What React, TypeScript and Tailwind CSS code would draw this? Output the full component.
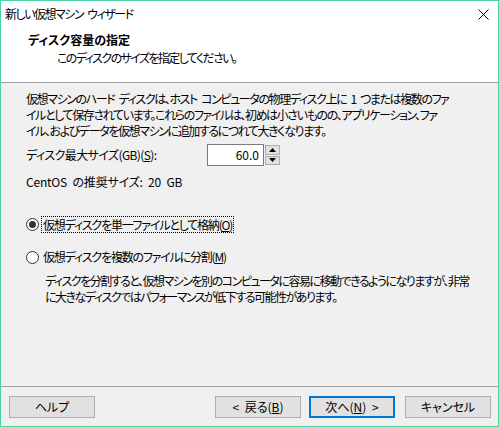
import React from 'react';

const font = "font-['Noto_Sans_CJK_JP','Noto_Sans',sans-serif] [font-feature-settings:'palt'] [word-spacing:3px]";

const Btn: React.FC<{ children: React.ReactNode; primary?: boolean }> = ({ children, primary }) => (
  <div
    className={
      'w-[86px] h-[22px] flex items-center justify-center bg-[#e1e1e1] text-[12px] leading-none ' +
      (primary ? 'border-2 border-[#0078d7]' : 'border border-[#adadad]')
    }
  >
    {children}
  </div>
);

const Radio: React.FC<{ checked?: boolean }> = ({ checked }) => (
  <div className="w-[13px] h-[13px] rounded-full border border-[#333] bg-white flex items-center justify-center">
    {checked && <div className="w-[7px] h-[7px] rounded-full bg-[#333]" />}
  </div>
);

const App: React.FC = () => {
  return (
    <div className={`w-[499px] h-[427px] border border-[#4cd3a5] bg-[#f0f0f0] flex flex-col text-black ${font}`}>
      {/* タイトル + ヘッダー */}
      <div className="h-[81px] bg-white">
        <div className="h-[26px] flex items-center justify-between pl-[4px] pr-[9px]">
          <span className="text-[12px] tracking-[-1.5px]">新しい仮想マシン ウィザード</span>
          <svg width="11" height="11" viewBox="0 0 11 11">
            <path d="M0.5 0.5 L10.5 10.5 M10.5 0.5 L0.5 10.5" stroke="#000" strokeWidth="1" />
          </svg>
        </div>
        <div className="pt-[5px] pl-[27px]">
          <div className="text-[12px] leading-[16px] font-bold">ディスク容量の指定</div>
          <div className="text-[12px] leading-[16px] pl-[29px] mt-[2px] tracking-[-1.6px]">このディスクのサイズを指定してください。</div>
        </div>
      </div>
      <div className="h-px bg-[#a0a0a0]" />

      {/* 本文 */}
      <div className="flex-1 pt-[8px] pl-[25px] text-[12px] leading-[16px] tracking-[-0.6px]">
        <div className="whitespace-nowrap tracking-[-1.4px]">
          <div>仮想マシンのハード ディスクは、ホスト コンピュータの物理ディスク上に 1 つまたは複数のファ</div>
          <div>イルとして保存されています。これらのファイルは、初めは小さいものの、アプリケーション、ファ</div>
          <div>イル、およびデータを仮想マシンに追加するにつれて大きくなります。</div>
        </div>

        <div className="mt-[5px] h-[22px] flex items-center">
          <span className="w-[181px]">
            ディスク最大サイズ(GB)(<span className="underline">S</span>):
          </span>
          <div className="flex h-[22px] tracking-normal">
            <div className="w-[57px] h-full bg-white border border-[#7a7a7a] flex items-center justify-end pr-[4px]">60.0</div>
            <div className="ml-px w-[15px] flex flex-col gap-px py-px">
              <div className="flex-1 bg-[#e1e1e1] border border-[#adadad] flex items-center justify-center">
                <svg width="7" height="4" viewBox="0 0 7 4"><path d="M3.5 0 L7 4 L0 4 Z" fill="#000" /></svg>
              </div>
              <div className="flex-1 bg-[#e1e1e1] border border-[#adadad] flex items-center justify-center">
                <svg width="7" height="4" viewBox="0 0 7 4"><path d="M0 0 L7 0 L3.5 4 Z" fill="#000" /></svg>
              </div>
            </div>
          </div>
        </div>

        <div className="mt-[8px] tracking-[-0.2px]">CentOS の推奨サイズ: 20 GB</div>

        <div className="mt-[25px] h-[18px] flex items-center tracking-[-1.2px]">
          <Radio checked />
          <span className="ml-[2px] px-px border border-dotted border-black leading-[15px]">
            仮想ディスクを単一ファイルとして格納(<span className="underline">O</span>)
          </span>
        </div>

        <div className="mt-[15px] h-[18px] flex items-center tracking-[-1.2px]">
          <Radio />
          <span className="ml-[4px]">
            仮想ディスクを複数のファイルに分割(<span className="underline">M</span>)
          </span>
        </div>

        <div className="mt-[7px] pl-[19px] whitespace-nowrap tracking-[-1.5px]">
          <div>ディスクを分割すると、仮想マシンを別のコンピュータに容易に移動できるようになりますが、非常</div>
          <div>に大きなディスクではパフォーマンスが低下する可能性があります。</div>
        </div>
      </div>

      {/* フッター */}
      <div className="h-px bg-[#a0a0a0]" />
      <div className="h-[39px] pt-[9px] pl-[8px] pr-[7px] flex items-start justify-between">
        <Btn>ヘルプ</Btn>
        <div className="flex gap-[8px]">
          <Btn>
            &lt; 戻る(<span className="underline">B</span>)
          </Btn>
          <Btn primary>
            次へ(<span className="underline">N</span>) &gt;
          </Btn>
          <div className="ml-[2px]">
            <Btn>キャンセル</Btn>
          </div>
        </div>
      </div>
    </div>
  );
};

export default App;
